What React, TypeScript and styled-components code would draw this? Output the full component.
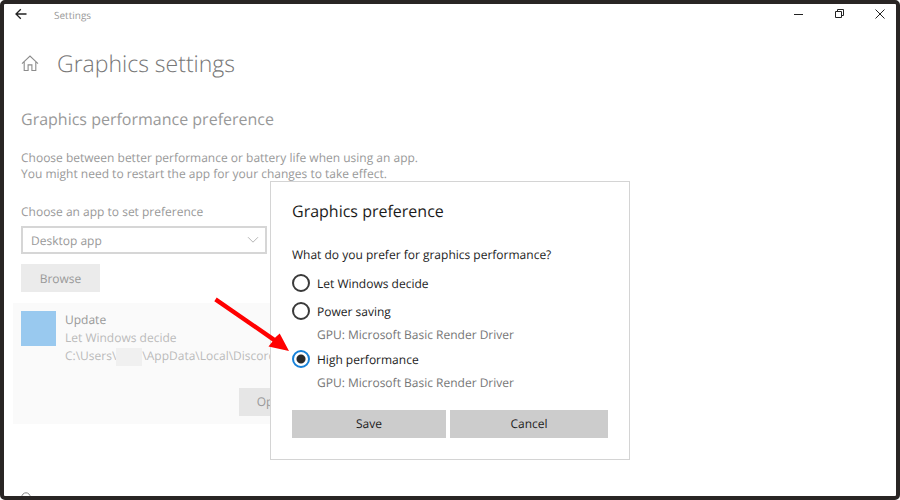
import React, { useState } from "react";
import styled, { createGlobalStyle } from "styled-components";

const GlobalStyle = createGlobalStyle`
  *, *::before, *::after { box-sizing: border-box; }
  body {
    margin: 0;
    background: #fff;
    font-family: "Open Sans", "Noto Sans", sans-serif;
    font-size: 12px;
    line-height: 16px;
    color: #1c1c1c;
    text-rendering: geometricPrecision;
  }
  h1, h2, p { margin: 0; font-weight: 400; }
  button, select, input { font: inherit; color: inherit; margin: 0; text-rendering: inherit; }
`;

const Window = styled.div`
  position: relative;
  height: 100vh;
  overflow: hidden;
  display: flex;
  flex-direction: column;
  border: 4px solid #292524;
  border-radius: 5px;
  background: #fff;
`;

const TitleBar = styled.header`
  flex: none;
  display: flex;
  align-items: center;
  height: 20px;
  padding: 0 10px 0 11px;
`;

const AppName = styled.span`
  margin-left: 27px;
  padding-top: 2px;
  font-size: 10px;
  color: #999;
`;

const WindowControls = styled.div`
  display: flex;
  gap: 28px;
  margin-left: auto;
`;

const IconButton = styled.button`
  display: flex;
  padding: 0;
  border: 0;
  background: none;
  color: #222;
`;

const Page = styled.main`
  flex: none;
  padding: 23px 9px 0;
`;

const Section = styled.section`
  display: flex;
  flex-direction: column;
  align-items: flex-start;
  padding: 0 8px;
  color: #999;
`;

const PageHeading = styled.div`
  display: flex;
  align-items: center;
  gap: 18px;
  height: 32px;
`;

const PageTitle = styled.h1`
  font-size: 23px;
  font-weight: 300;
  line-height: 32px;
  color: #777;
`;

const SectionTitle = styled.h2`
  margin-top: 28px;
  font-size: 16px;
  line-height: 24px;
`;

const Description = styled.p`
  margin-top: 19px;
`;

const FieldLabel = styled.label`
  margin-top: 22px;
`;

const SelectBox = styled.div`
  display: grid;
  align-items: center;
  width: 246px;
  margin-top: 6px;

  & > * { grid-area: 1 / 1; }
  & > svg { justify-self: end; margin-right: 8px; pointer-events: none; }
`;

const Select = styled.select`
  appearance: none;
  width: 100%;
  height: 28px;
  padding: 1px 8px 0;
  border: 2px solid #d6d6d6;
  border-radius: 0;
  background: #fff;
`;

const DimButton = styled.button<{ $tone: string }>`
  min-width: 79px;
  height: 28px;
  padding: 1px 18px 0;
  border: 0;
  background: ${(p) => p.$tone};
  color: #999;
`;

const BrowseRow = styled.div`
  margin-top: 10px;
`;

const AppCard = styled.article`
  display: flex;
  flex-direction: column;
  max-width: 314px;
  margin-top: 11px;
  padding: 8px;
  background: #fafafa;
`;

const AppSummary = styled.div`
  display: flex;
  gap: 9px;
  color: #bbb;
  line-height: 18px;
  white-space: nowrap;
`;

const AppTile = styled.div`
  flex: none;
  width: 35px;
  height: 35px;
  background: #99c9ef;
`;

const AppTitle = styled.p`
  color: #999;
`;

const Redacted = styled.span`
  display: inline-block;
  width: 26px;
  height: 18px;
  vertical-align: middle;
  background: #f0f0f0;
`;

const CardActions = styled.div`
  display: flex;
  justify-content: flex-end;
  margin-top: 22px;
`;

const NextItem = styled.div`
  margin-top: 66px;
  padding-left: 8px;
  color: #888;
`;

const Overlay = styled.div`
  position: absolute;
  inset: 0;
  display: flex;
  justify-content: center;
  align-items: flex-start;
  padding-top: 177px;
`;

const Dialog = styled.form`
  position: relative;
  width: 360px;
  padding: 17px 21px 21px;
  border: 1px solid #d4d4d4;
  background: #fff;
`;

const DialogTitle = styled.h2`
  font-size: 16px;
  line-height: 24px;
`;

const Choices = styled.fieldset`
  margin: 24px 0 0;
  padding: 0;
  border: 0;
`;

const Question = styled.legend`
  padding: 0;
  margin-bottom: 6px;
`;

const Choice = styled.label`
  display: flex;
  align-items: center;
  gap: 7px;
  height: 28px;
`;

const ChoiceText = styled.span`
  padding-top: 2px;
`;

const Radio = styled.input`
  appearance: none;
  width: 18px;
  height: 18px;
  border: 2px solid #3a3a3a;
  border-radius: 50%;
  background: #fff;

  &:checked {
    border-color: #1681d9;
    background: radial-gradient(circle, #2b2b2b 4px, #fff 5px);
  }
`;

const GpuNote = styled.p`
  height: 20px;
  padding-left: 25px;
  line-height: 20px;
  color: #767676;
`;

const DialogActions = styled.div`
  display: grid;
  grid-template-columns: 154fr 158fr;
  gap: 4px;
  margin-top: 17px;
`;

const DialogButton = styled.button`
  height: 28px;
  border: 0;
  background: #ccc;
`;

const Pointer = styled.svg`
  position: absolute;
  left: -60px;
  top: 113px;
  pointer-events: none;
`;

const options = [
  { id: "auto", label: "Let Windows decide" },
  { id: "saving", label: "Power saving", gpu: "GPU: Microsoft Basic Render Driver" },
  { id: "high", label: "High performance", gpu: "GPU: Microsoft Basic Render Driver" },
];

export default function App() {
  const [choice, setChoice] = useState("high");

  return (
    <>
      <GlobalStyle />
      <Window>
        <TitleBar>
          <IconButton type="button" aria-label="Back">
            <svg width="12" height="12" viewBox="0 0 12 12" fill="none" stroke="currentColor" strokeWidth="1.3">
              <path d="M11.5 6H1M5.8 1.2L1 6l4.8 4.8" />
            </svg>
          </IconButton>
          <AppName>Settings</AppName>
          <WindowControls>
            <IconButton type="button" aria-label="Minimize">
              <svg width="12" height="12" viewBox="0 0 12 12" fill="none" stroke="currentColor">
                <path d="M0 6.5h9" />
              </svg>
            </IconButton>
            <IconButton type="button" aria-label="Restore">
              <svg width="12" height="12" viewBox="0 0 12 12" fill="none" stroke="currentColor">
                <path d="M1.5 3.5h6v6h-6zM3.5 3.5v-2h6v6h-2" />
              </svg>
            </IconButton>
            <IconButton type="button" aria-label="Close">
              <svg width="12" height="12" viewBox="0 0 12 12" fill="none" stroke="currentColor">
                <path d="M1.5 1.5l9 9M10.5 1.5l-9 9" />
              </svg>
            </IconButton>
          </WindowControls>
        </TitleBar>

        <Page>
          <Section>
            <PageHeading>
              <svg width="18" height="18" viewBox="0 0 18 18" fill="none" stroke="#8c8c8c" strokeWidth="1.1">
                <path d="M1 9.6L9 2l8 7.6M3.2 7.8v8.7h3.9v-5.6h3.8v5.6h3.9V7.8" />
              </svg>
              <PageTitle>Graphics settings</PageTitle>
            </PageHeading>
            <SectionTitle>Graphics performance preference</SectionTitle>
            <Description>
              Choose between better performance or battery life when using an app.
              <br />
              You might need to restart the app for your changes to take effect.
            </Description>
            <FieldLabel htmlFor="app-kind">Choose an app to set preference</FieldLabel>
            <SelectBox>
              <Select id="app-kind" defaultValue="desktop">
                <option value="desktop">Desktop app</option>
              </Select>
              <svg width="12" height="8" viewBox="0 0 12 8" fill="none" stroke="#b5b5b5">
                <path d="M1 1.2l5 5 5-5" />
              </svg>
            </SelectBox>
            <BrowseRow>
              <DimButton type="button" $tone="#ebebeb">Browse</DimButton>
            </BrowseRow>
          </Section>

          <AppCard>
            <AppSummary>
              <AppTile />
              <div>
                <AppTitle>Update</AppTitle>
                <p>Let Windows decide</p>
                <p>
                  C:\Users\<Redacted />\AppData\Local\Discord
                </p>
              </div>
            </AppSummary>
            <CardActions>
              <DimButton type="button" $tone="#e6e6e6">Options</DimButton>
            </CardActions>
          </AppCard>

          <NextItem>
            <svg width="10" height="10" viewBox="0 0 10 10" fill="none" stroke="currentColor">
              <circle cx="5" cy="5" r="4.2" />
            </svg>
          </NextItem>
        </Page>

        <Overlay>
          <Dialog role="dialog" aria-labelledby="dialog-title" onSubmit={(e) => e.preventDefault()}>
            <DialogTitle id="dialog-title">Graphics preference</DialogTitle>
            <Choices>
              <Question>What do you prefer for graphics performance?</Question>
              {options.map((o) => (
                <React.Fragment key={o.id}>
                  <Choice>
                    <Radio
                      type="radio"
                      name="gpu"
                      value={o.id}
                      checked={choice === o.id}
                      onChange={() => setChoice(o.id)}
                    />
                    <ChoiceText>{o.label}</ChoiceText>
                  </Choice>
                  {o.gpu && <GpuNote>{o.gpu}</GpuNote>}
                </React.Fragment>
              ))}
            </Choices>
            <DialogActions>
              <DialogButton type="submit">Save</DialogButton>
              <DialogButton type="button">Cancel</DialogButton>
            </DialogActions>
            <Pointer width="82" height="62" viewBox="0 0 82 62" fill="#f00" aria-hidden="true">
              <path d="M5.7 2.6L64 42.8 68.7 38.5 78 56 57.5 51.5 61.5 46.4 3.3 6.2z" />
            </Pointer>
          </Dialog>
        </Overlay>
      </Window>
    </>
  );
}
